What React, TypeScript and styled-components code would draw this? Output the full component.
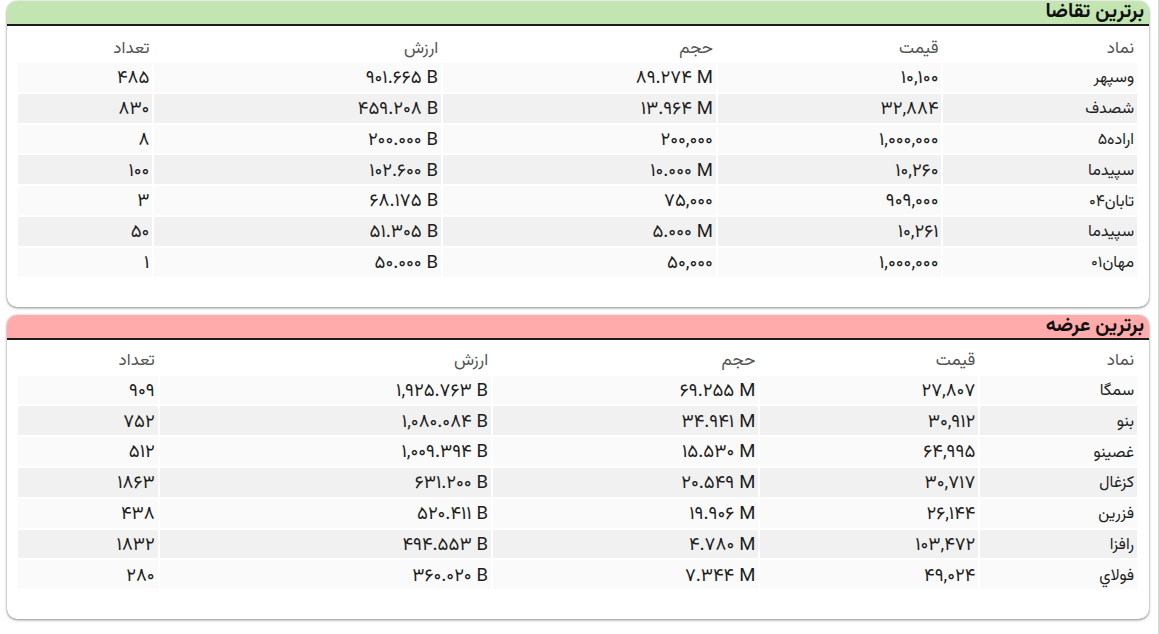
import React from "react";
import styled, { createGlobalStyle } from "styled-components";

const Global = createGlobalStyle`
  html, body { margin: 0; padding: 0; background: #ffffff; }
  body {
    font-family: "Vazirmatn", "Noto Sans Arabic", "DejaVu Sans", sans-serif;
    direction: rtl;
  }
`;

const Page = styled.div`
  width: 1159px;
  height: 634px;
  box-sizing: border-box;
  padding: 1px 9px 0 7px;
  display: flex;
  flex-direction: column;
  gap: 8px;
  border-right: 1px solid #d4d4d4;
  direction: rtl;
`;

const Card = styled.section`
  background: #ffffff;
  border-radius: 10px;
  box-shadow: 0 1px 3px rgba(0, 0, 0, 0.45), 0 0 1px rgba(0, 0, 0, 0.3);
  display: flex;
  flex-direction: column;
`;

const CardHeader = styled.header<{ $bg: string }>`
  height: 23px;
  border-radius: 10px 10px 0 0;
  background: ${(p) => p.$bg};
  border-bottom: 2px solid #1c1c1c;
  padding: 0 5px 0 0;
  display: flex;
  align-items: center;
  justify-content: flex-start;
  font-size: 20px;
  font-weight: bold;
  color: #111;
  line-height: 23px;
  white-space: nowrap;
`;

const Body = styled.div<{ $top: number }>`
  padding: ${(p) => p.$top}px 10px 28px 9px;
`;

const Table = styled.table`
  width: 100%;
  border-collapse: separate;
  border-spacing: 2px;
  table-layout: fixed;
`;

const Col = styled.col<{ $w: number }>`
  width: ${(p) => p.$w}px;
`;

const Th = styled.th`
  height: 24px;
  padding: 4px 3px 0;
  text-align: right;
  font-weight: normal;
  font-size: 17px;
  line-height: 1;
  color: #555;
  background: #ffffff;
  white-space: nowrap;
`;

const Tr = styled.tr`
  &:nth-child(odd) td { background: #fafafa; }
  &:nth-child(even) td { background: #f1f1f1; }
`;

const Td = styled.td`
  height: 24.8px;
  padding: 4px 3px 0;
  text-align: right;
  font-size: 16px;
  line-height: 1;
  color: #1e1e1e;
  white-space: nowrap;
`;

const Num = styled.span`
  direction: ltr;
  unicode-bidi: isolate;
  display: inline-block;
  font-size: 18.5px;
  line-height: 1;
`;

type Row = [string, string, string, string, string];

const demand: Row[] = [
  ["وسپهر", "۱۰,۱۰۰", "۸۹.۲۷۴ M", "۹۰۱.۶۶۵ B", "۴۸۵"],
  ["شصدف", "۳۲,۸۸۴", "۱۳.۹۶۴ M", "۴۵۹.۲۰۸ B", "۸۳۰"],
  ["اراده۵", "۱,۰۰۰,۰۰۰", "۲۰۰,۰۰۰", "۲۰۰.۰۰۰ B", "۸"],
  ["سپیدما", "۱۰,۲۶۰", "۱۰.۰۰۰ M", "۱۰۲.۶۰۰ B", "۱۰۰"],
  ["تابان۰۴", "۹۰۹,۰۰۰", "۷۵,۰۰۰", "۶۸.۱۷۵ B", "۳"],
  ["سپیدما", "۱۰,۲۶۱", "۵.۰۰۰ M", "۵۱.۳۰۵ B", "۵۰"],
  ["مهان۰۱", "۱,۰۰۰,۰۰۰", "۵۰,۰۰۰", "۵۰.۰۰۰ B", "۱"],
];

const supply: Row[] = [
  ["سمگا", "۲۷,۸۰۷", "۶۹.۲۵۵ M", "۱,۹۲۵.۷۶۳ B", "۹۰۹"],
  ["بنو", "۳۰,۹۱۲", "۳۴.۹۴۱ M", "۱,۰۸۰.۰۸۴ B", "۷۵۲"],
  ["غصينو", "۶۴,۹۹۵", "۱۵.۵۳۰ M", "۱,۰۰۹.۳۹۴ B", "۵۱۲"],
  ["كزغال", "۳۰,۷۱۷", "۲۰.۵۴۹ M", "۶۳۱.۲۰۰ B", "۱۸۶۳"],
  ["فزرين", "۲۶,۱۴۴", "۱۹.۹۰۶ M", "۵۲۰.۴۱۱ B", "۴۳۸"],
  ["رافزا", "۱۰۳,۴۷۲", "۴.۷۸۰ M", "۴۹۴.۵۵۳ B", "۱۸۳۲"],
  ["فولاي", "۴۹,۰۲۴", "۷.۳۴۴ M", "۳۶۰.۰۲۰ B", "۲۸۰"],
];

const heads = ["نماد", "قیمت", "حجم", "ارزش", "تعداد"];

function Panel(props: { title: string; bg: string; rows: Row[]; widths: number[]; top: number }) {
  return (
    <Card>
      <CardHeader $bg={props.bg}>{props.title}</CardHeader>
      <Body $top={props.top}>
        <Table>
          <colgroup>
            {props.widths.map((w, i) => (
              <Col key={i} $w={w} />
            ))}
          </colgroup>
          <thead>
            <tr>
              {heads.map((h) => (
                <Th key={h}>{h}</Th>
              ))}
            </tr>
          </thead>
          <tbody>
            {props.rows.map((r, i) => (
              <Tr key={i}>
                <Td>{r[0]}</Td>
                {r.slice(1).map((c, j) => (
                  <Td key={j}>
                    <Num>{c}</Num>
                  </Td>
                ))}
              </Tr>
            ))}
          </tbody>
        </Table>
      </Body>
    </Card>
  );
}

export default function App() {
  return (
    <>
      <Global />
      <Page>
        <Panel title="برترین تقاضا" bg="#c2e5b2" rows={demand} widths={[193, 223, 272, 286, 134]} top={5} />
        <Panel title="برترین عرضه" bg="#ffabab" rows={supply} widths={[156, 217, 264, 330, 139]} top={4} />
      </Page>
    </>
  );
}
